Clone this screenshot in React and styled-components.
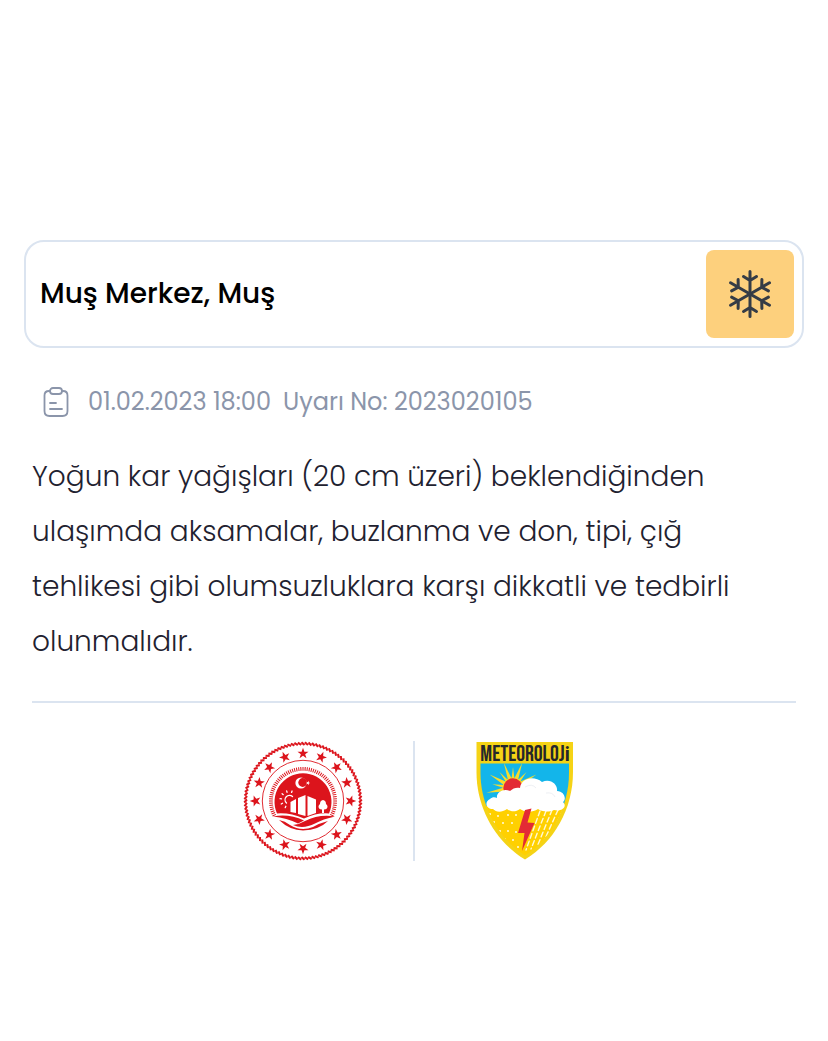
import React from 'react';
import styled, { createGlobalStyle } from 'styled-components';

const GlobalStyle = createGlobalStyle`
  * {
    box-sizing: border-box;
  }

  body {
    margin: 0;
    background: #ffffff;
    font-family: Poppins, Inter, "Noto Sans", sans-serif;
  }
`

const Page = styled.main`
  padding: 240px 24px 24px;
`

const LocationCard = styled.header`
  display: flex;
  align-items: center;
  justify-content: space-between;
  padding: 8px 8px 8px 14px;
  border: 2px solid #dbe4f0;
  border-radius: 20px;
`

const Title = styled.h1`
  margin: 0;
  font-size: 28px;
  font-weight: 500;
  line-height: 40px;
  color: #000000;
`

const WarningTile = styled.div`
  display: flex;
  align-items: center;
  justify-content: center;
  width: 88px;
  height: 88px;
  border-radius: 8px;
  background: #fdd07d;
  color: #353c46;
`

const Content = styled.section`
  padding: 0 8px;
`

const Meta = styled.div`
  display: flex;
  align-items: center;
  gap: 16px;
  margin-top: 36px;
  padding-left: 8px;
  font-size: 24px;
  line-height: 36px;
  color: #8b95aa;
`

const MetaText = styled.div`
  display: flex;
  flex-wrap: wrap;
  column-gap: 12px;
`

const Description = styled.p`
  margin: 29px 0 0;
  padding-bottom: 32px;
  border-bottom: 2px solid #dbe4f0;
  font-size: 28px;
  font-weight: 300;
  line-height: 55px;
  color: #1f2230;
`

const Logos = styled.footer`
  display: flex;
  justify-content: center;
  gap: 50px;
  margin-top: 38px;
`

const Divider = styled.div`
  width: 2px;
  background: #dbe4f0;
`

const Logo = styled.svg`
  display: block;
  width: 120px;
  height: 120px;
  overflow: visible;
`

const LogoText = styled.text`
  font-family: "Bebas Neue", "Roboto Condensed", "Liberation Sans", sans-serif;
  font-size: 22px;
  font-weight: 400;
`

const SmallLetter = styled.tspan`
  font-family: "Roboto Condensed", "Liberation Sans", sans-serif;
  font-size: 20px;
  font-weight: 700;
`

const RED = '#dc141c';
const STAR = '0,-5.4 1.3,-1.7 5.1,-1.7 2,0.7 3.2,4.4 0,2.1 -3.2,4.4 -2,0.7 -5.1,-1.7 -1.3,-1.7';

const steps = (count) => Array.from({ length: count }, (_, i) => (i * 360) / count);

const Snowflake = () => (
  <svg width="50" height="50" viewBox="0 0 50 50" fill="none" stroke="currentColor" strokeWidth="3" strokeLinecap="round" strokeLinejoin="round">
    {steps(6).map((angle) => (
      <path key={angle} d="M25 25V2.500M18.500 7.500L25 11.500L31.500 7.500" transform={`rotate(${angle} 25 25)`} />
    ))}
  </svg>
)

const Clipboard = () => (
  <svg width="32" height="32" viewBox="0 0 32 32" fill="none" stroke="currentColor" strokeWidth="1.8" strokeLinecap="round" strokeLinejoin="round">
    <path d="M10 5H9Q4.500 5 4.500 9.500V25Q4.500 30 9.500 30H22.500Q27.500 30 27.500 25V9.500Q27.500 5 23 5H22" />
    <rect x="10" y="2" width="12" height="6" rx="3" />
    <path d="M10 17H16M10 23H22" />
  </svg>
)

const MinistryLogo = () => (
  <Logo viewBox="0 0 120 120" role="img" aria-label="Bakanlık">
    <circle cx="60" cy="60" r="57.400" fill="none" stroke={RED} strokeWidth="1.600" strokeOpacity=".45" />
    <g stroke={RED} strokeWidth="1.9">
      {steps(104).map((angle) => (
        <path key={angle} d="M58.500 1.200L61.500 4" transform={`rotate(${angle} 60 60)`} />
      ))}
    </g>
    <g fill={RED}>
      {steps(16).map((angle) => (
        <polygon key={angle} points={STAR} transform={`rotate(${angle} 60 60) translate(60 12.500) scale(1.080)`} />
      ))}
    </g>
    <circle cx="60" cy="60" r="40.700" fill="none" stroke={RED} strokeWidth=".9" />
    <g stroke={RED} strokeWidth="1">
      {steps(96).filter((angle) => angle < 118 || angle > 242).map((angle) => (
        <path key={angle} d="M60 29.800V26" transform={`rotate(${angle} 60 60)`} />
      ))}
    </g>
    <path d="M34 72.500A28.500 28.500 0 1 1 86 72.500Q74 71.500 61 77.500Q47 71.500 34 72.500Z" fill={RED} />
    <path d="M30 75.500Q46 72.500 61 79.500L55 82.500Q44 77 30 75.500Z" fill={RED} />
    <path d="M92 75.500Q76 73 62 80Q56 83.500 50 84Q60 88.500 72 82.500Q80 78 92 75.500Z" fill={RED} />
    <path d="M36 79Q47 89.500 60 89.500Q76 89 85 80Q77 82 70 86Q58 91 47 84Q42 80 36 79Z" fill={RED} />
    <circle cx="58" cy="42" r="5.600" fill="#fff" />
    <circle cx="59.700" cy="41.500" r="4.400" fill={RED} />
    <polygon points={STAR} fill="#fff" transform="translate(65 42) scale(.42) rotate(90)" />
    <g stroke="#fff" strokeWidth="1.300" strokeLinecap="round" fill="none">
      <path d="M43.500 62A4.200 4.200 0 1 1 49.500 55.500" />
      {[205, 240, 275, 310, 345, 380].map((angle) => (
        <path key={angle} d="M46 51V49.500" transform={`rotate(${angle} 46 58.500)`} />
      ))}
    </g>
    <g fill="#fff">
      <path d="M47.500 61L53 58V72L47.500 71Z" />
      <path d="M55 57L62.500 54V75L55 73Z" />
      <path d="M64.500 55L73 58.500V72L64.500 75Z" />
      <path d="M79 72V68.500Q75.500 68.500 75.500 65.500Q75.500 64 77 63Q77 59.500 80 59Q83 59.500 83 63Q84.500 64 84.500 65.500Q84.500 68.500 81 68.500V72Z" />
    </g>
  </Logo>
)

const MeteorologyLogo = () => (
  <Logo viewBox="0 0 120 120" role="img" aria-label="Meteoroloji">
    <defs>
      <clipPath id="inner">
        <path d="M15.500 22.500H104V32C104 65 87 97 60 114.500C33 97 15.500 65 15.500 32Z" />
      </clipPath>
    </defs>
    <path d="M11.500 1H108V31C108 68 89 101 60 118.500C31 101 11.500 68 11.500 31Z" fill="#f5d316" />
    <LogoText x="60" y="20" textAnchor="middle" fill="#25272b">METEOROLOJ<SmallLetter>i</SmallLetter></LogoText>
    <g clipPath="url(#inner)">
      <path d="M15 22H105V65H15Z" fill="#13b5ea" />
      <path d="M15 65H105V120H15Z" fill="#ffd000" />
      <g fill="#f5dc2d">
        {[-100, -80, -60, -40, -20, 0, 20, 40, 60, 80].map((angle, i) => (
          <path key={angle} d={i % 2 ? 'M46.500 38L48 26L49.500 38Z' : 'M46 38L48 20L50 38Z'} transform={`rotate(${angle} 48 47)`} />
        ))}
      </g>
      <circle cx="48" cy="47" r="10.500" fill="#f5dc2d" />
      <circle cx="48" cy="47" r="9.700" fill="#e32b35" />
      <g fill="#fff8d4">
        {[[25, 73], [33, 75], [43, 74], [51, 74], [29, 81], [38, 82], [47, 82], [35, 90], [43, 90], [51, 91], [40, 98], [48, 99], [53, 106], [46, 105]].map(([x, y]) => (
          <circle key={`${x}-${y}`} cx={x} cy={y} r="1.100" />
        ))}
      </g>
      <g stroke="#fff8d4" strokeWidth="1.400" strokeDasharray="5 3" strokeLinecap="round">
        <path d="M75 70L61 109M81 70L66 108M87 69L72 106M93 69L79 100M98 69L88 90" />
      </g>
    </g>
    <path d="M28 68C21 68 19 61 25 58C27 56 30 56 32 57C31 51 39 47 45 50C48 47 52 46 55 47C56 37 69 34 77 41C86 37 93 44 92 50C99 50 102 58 98 61C103 66 96 71 89 69C82 72 76 70 73 68C67 72 59 71 55 68C50 72 44 70 42 68C36 72 31 71 28 68Z" fill="#fff" />
    <path d="M60 46Q67 42 71 47M81 52Q88 51 90 56" fill="none" stroke="#eef0f4" strokeWidth="1" />
    <path d="M60 69L66.500 67.500L62.500 81.500L69.500 82L57 110L59.500 92L53 92Z" fill="#e32b35" />
  </Logo>
)

const App = () => {
  return (
    <>
      <GlobalStyle />
      <Page>
        <LocationCard>
          <Title>Muş Merkez, Muş</Title>
          <WarningTile>
            <Snowflake />
          </WarningTile>
        </LocationCard>

        <Content>
          <Meta>
            <Clipboard />
            <MetaText>
              <time dateTime="2023-02-01T18:00">01.02.2023 18:00</time>
              <span>Uyarı No: 2023020105</span>
            </MetaText>
          </Meta>

          <Description>
            Yoğun kar yağışları (20 cm üzeri) beklendiğinden ulaşımda aksamalar, buzlanma ve don, tipi, çığ tehlikesi gibi olumsuzluklara karşı dikkatli ve tedbirli olunmalıdır.
          </Description>

          <Logos>
            <MinistryLogo />
            <Divider />
            <MeteorologyLogo />
          </Logos>
        </Content>
      </Page>
    </>
  )
}

export default App;
